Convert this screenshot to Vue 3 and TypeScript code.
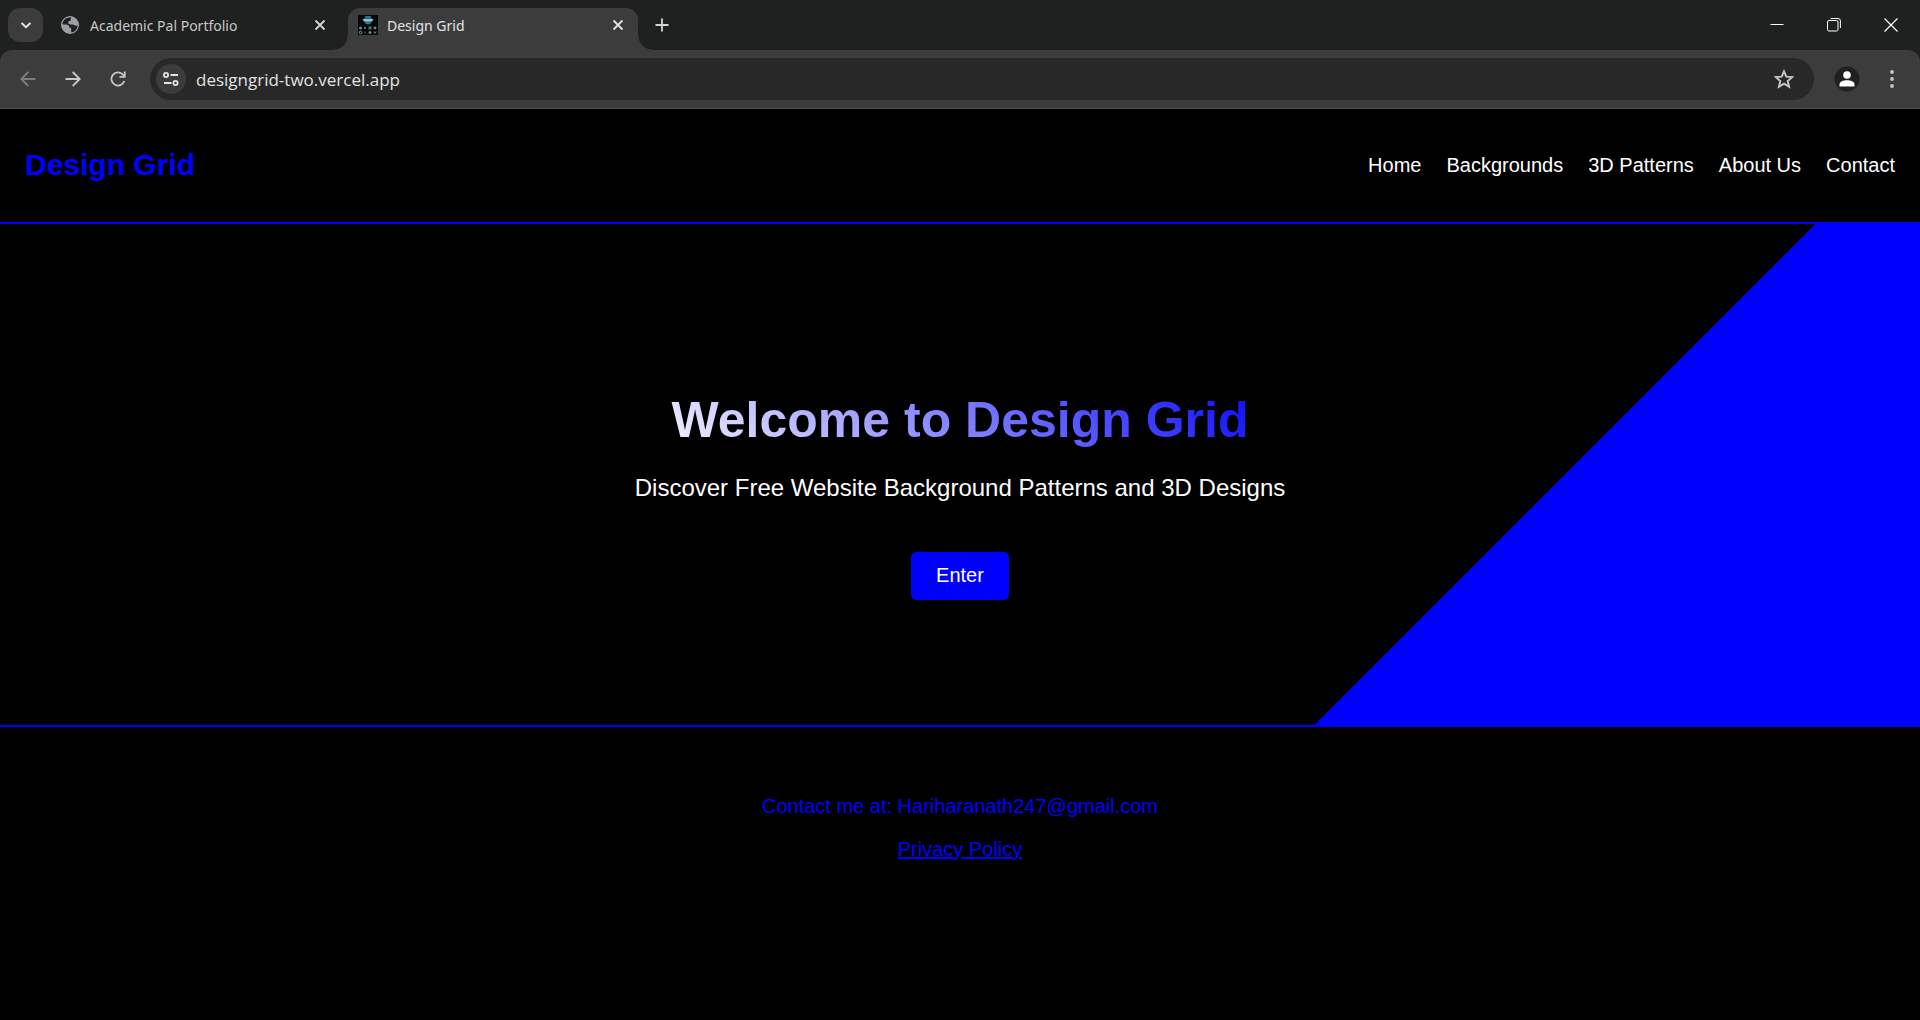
<script setup lang="ts">
import { ref } from 'vue'

interface NavItem {
  label: string
  href: string
}

const address = ref('designgrid-two.vercel.app')

const navItems: NavItem[] = [
  { label: 'Home', href: '#home' },
  { label: 'Backgrounds', href: '#backgrounds' },
  { label: '3D Patterns', href: '#patterns' },
  { label: 'About Us', href: '#about' },
  { label: 'Contact', href: '#contact' },
]
</script>

<template>
  <div class="window">
    <div class="tab-strip">
      <button class="tab-search" aria-label="Search tabs">
        <svg width="12" height="12" viewBox="0 0 12 12"><path d="M1.500 4 6 8.200l4.500-4.200" fill="none" stroke="#e3e3e3" stroke-width="2" /></svg>
      </button>
      <div class="tab">
        <svg class="favicon globe" width="18" height="18" viewBox="0 0 18 18">
          <circle cx="9" cy="9" r="8" fill="none" stroke="#9aa0a6" stroke-width="2" />
          <path d="M10.500 1.500C6 .8 2 3.500 1.300 8.200H5c2.200 0 3.800 1.300 3.800 3.300h1.700v5C14 16 16.500 13 16.700 9.500c-1 .9-2.300 1.100-3.300.3-.8-.7-1.700-.8-2.900-.8-2.700 0-3.900-1-3.900-2.500 0-1.200.9-1.700 2.300-1.700 0-1.700.5-2.800 1.600-3.300z" fill="#1f2120" />
          <path d="M1.500 8.600H5c2 0 3.400 1.200 3.400 3.200h1.700v4.700C5.500 17.500 1.300 14 1.500 8.600zM11 1.600c-1.300.7-1.500 1.800-1.500 3.500-1.400 0-2.300.4-2.300 1.400 0 1.400 1.300 2 3.600 2 1.300 0 2.200.2 3 .9.900.7 2 .3 2.800-.6C16.500 5 14.500 2.300 11 1.600z" fill="#9aa0a6" />
        </svg>
        <span class="tab-title">Academic Pal Portfolio</span>
        <button class="tab-close" aria-label="Close Academic Pal Portfolio">
          <svg width="12" height="12" viewBox="0 0 12 12"><path d="m1.500 1.500 9 9m0-9-9 9" stroke="#d6d6d6" stroke-width="1.800" /></svg>
        </button>
      </div>
      <div class="tab active">
        <svg class="favicon" width="20" height="20" viewBox="0 0 20 20">
          <rect width="20" height="20" fill="#05090b" />
          <path d="M6 5a4 3.800 0 0 1 8 0c0 3-2 4.500-4 4.500S6 8 6 5z" fill="#17647a" />
          <path d="M4.500 4h11l-1.500 2.500H6z" fill="#a9b9be" />
          <path d="M7 1.800h6M8 8.300h4" stroke="#2b9ab8" />
          <g fill="#72848a">
            <circle cx="2.500" cy="13" r="1.500" /><path d="m6 12 2 2m0-2-2 2" stroke="#58666b" />
            <rect x="10.500" y="11.500" width="3" height="3" fill="#456f7c" /><circle cx="17" cy="13" r="1.400" />
            <circle cx="2.500" cy="17.500" r="1.300" fill="none" stroke="#5ba4ba" /><path d="m6 16.500 2 2m0-2-2 2" stroke="#35454b" />
            <circle cx="12" cy="17.500" r="1.500" /><path d="m16 16.500 2 2m0-2-2 2" stroke="#5ba4ba" />
          </g>
        </svg>
        <span class="tab-title">Design Grid</span>
        <button class="tab-close" aria-label="Close Design Grid">
          <svg width="12" height="12" viewBox="0 0 12 12"><path d="m1.500 1.500 9 9m0-9-9 9" stroke="#e3e3e3" stroke-width="1.800" /></svg>
        </button>
      </div>
      <button class="new-tab" aria-label="New tab">
        <svg width="14" height="14" viewBox="0 0 14 14"><path d="M7 .5v13M.5 7h13" stroke="#d6d6d6" stroke-width="1.800" /></svg>
      </button>
      <div class="window-controls">
        <button aria-label="Minimize">
          <svg width="14" height="14" viewBox="0 0 14 14"><path d="M.5 6.500h13" stroke="#fff" /></svg>
        </button>
        <button aria-label="Restore">
          <svg width="14" height="14" viewBox="0 0 14 14" fill="none" stroke="#fff"><rect x=".5" y="2.500" width="10.500" height="10.500" rx="1.500" /><path d="M3.500 .5H11a2.400 2.400 0 0 1 2.400 2.400V10" /></svg>
        </button>
        <button aria-label="Close window">
          <svg width="14" height="14" viewBox="0 0 14 14"><path d="m.5.5 13 13m0-13-13 13" stroke="#fff" stroke-width="1.200" /></svg>
        </button>
      </div>
    </div>

    <div class="toolbar-frame">
      <div class="toolbar">
        <button class="tool" aria-label="Back">
          <svg width="16" height="16" viewBox="0 0 16 16" fill="none" stroke="#7d7d7d" stroke-width="1.800"><path d="M15.500 8H1.500M8.300 1 1.300 8l7 7" /></svg>
        </button>
        <button class="tool" aria-label="Forward">
          <svg width="16" height="16" viewBox="0 0 16 16" fill="none" stroke="#c7c7c7" stroke-width="1.800"><path d="M.5 8h14M7.700 1l7 7-7 7" /></svg>
        </button>
        <button class="tool" aria-label="Reload">
          <svg width="16" height="16" viewBox="0 0 16 16" fill="none" stroke="#c7c7c7" stroke-width="1.800"><path d="M14.300 10A6.600 6.600 0 1 1 13 3.600L14.600 5.300M14.800 .5v5.300H9.500" /></svg>
        </button>
        <div class="omnibox">
          <button class="site-info" aria-label="View site information">
            <svg width="16" height="14" viewBox="0 0 16 14" fill="none" stroke="#e3e3e3" stroke-width="1.800"><circle cx="3" cy="3" r="2.100" /><path d="M7.500 3h7.500M1 11h7.500" /><circle cx="12.500" cy="11" r="2.100" /></svg>
          </button>
          <input v-model="address" class="address" type="text" aria-label="Address" spellcheck="false" />
          <button class="bookmark" aria-label="Bookmark this tab">
            <svg width="20" height="20" viewBox="0 0 20 20"><path d="m10 2.300 2.300 5.300 5.900.5-4.500 3.900 1.400 5.800L10 14.700l-5.100 3.100L6.300 12 1.800 8.100l5.900-.5z" fill="none" stroke="#c7c7c7" stroke-width="1.900" /></svg>
          </button>
        </div>
        <button class="profile" aria-label="Profile">
          <svg width="26" height="26" viewBox="0 0 26 26"><circle cx="13" cy="13" r="12.500" fill="#1f2120" /><circle cx="13" cy="9" r="3.800" fill="#fff" /><path d="M5.500 20.500v-2c0-3 4-4.300 7.500-4.300s7.500 1.300 7.500 4.300v2z" fill="#fff" /></svg>
        </button>
        <button class="menu" aria-label="Browser menu">
          <svg width="4" height="20" viewBox="0 0 4 20" fill="#c7c7c7"><circle cx="2" cy="3" r="1.900" /><circle cx="2" cy="10" r="1.900" /><circle cx="2" cy="17" r="1.900" /></svg>
        </button>
      </div>
    </div>

    <div class="page">
      <header class="site-header">
        <div class="brand">Design Grid</div>
        <nav class="site-nav">
          <a v-for="item in navItems" :key="item.label" :href="item.href">{{ item.label }}</a>
        </nav>
      </header>
      <main class="hero">
        <div class="hero-text">
          <h1>Welcome to Design Grid</h1>
          <p>Discover Free Website Background Patterns and 3D Designs</p>
        </div>
        <button class="enter">Enter</button>
      </main>
      <footer class="site-footer">
        <p>Contact me at: Hariharanath247@gmail.com</p>
        <a href="#privacy">Privacy Policy</a>
      </footer>
    </div>
  </div>
</template>

<style>
body {
  margin: 0;
  background: #000;
}
</style>

<style scoped>
* {
  box-sizing: border-box;
}

button {
  display: flex;
  align-items: center;
  justify-content: center;
  flex: none;
  margin: 0;
  padding: 0;
  border: 0;
  background: none;
}

svg {
  display: block;
  flex: none;
}

.window {
  display: flex;
  flex-direction: column;
  min-height: 100vh;
  background: #000;
  font-family: "Noto Sans", "Open Sans", sans-serif;
}

.tab-strip {
  display: flex;
  height: 50px;
  padding: 8px 0 0 8px;
  background: #1f2120;
}

.tab-search {
  width: 35px;
  height: 34px;
  border-radius: 12px;
  background: #3c3c3c;
}

.tab {
  display: flex;
  align-items: center;
  width: 290px;
  height: 34px;
  margin-left: 5px;
  padding: 0 6px 0 12px;
  font-size: 14px;
  color: #c7c7c7;
}

.favicon {
  margin-right: 9px;
}

.globe {
  margin-left: 1px;
  margin-right: 11px;
}

.tab-title {
  flex: 1;
  padding-top: 2px;
  line-height: 20px;
  white-space: nowrap;
}

.tab-close {
  width: 24px;
  height: 24px;
}

.tab.active {
  position: relative;
  height: 42px;
  margin-left: 10px;
  padding: 0 8px 8px 10px;
  border-radius: 12px 12px 0 0;
  background: #3c3c3c;
  color: #e3e3e3;
}

/* Flared feet that join the active tab to the toolbar. */
.tab.active::before,
.tab.active::after {
  content: "";
  position: absolute;
  bottom: 0;
  width: 14px;
  height: 14px;
}

.tab.active::before {
  right: 100%;
  background: radial-gradient(circle at 0 0, transparent 13px, #3c3c3c 14px);
}

.tab.active::after {
  left: 100%;
  background: radial-gradient(circle at 100% 0, transparent 13px, #3c3c3c 14px);
}

.new-tab {
  width: 34px;
  height: 34px;
  margin-left: 7px;
}

.window-controls {
  display: flex;
  margin-left: auto;
  padding-right: 1px;
}

.window-controls button {
  width: 57px;
  height: 34px;
}

.toolbar-frame {
  background: #1f2120;
}

.toolbar {
  display: flex;
  align-items: center;
  height: 59px;
  padding: 0 16px 0 5px;
  border-bottom: 1px solid #4a4a4a;
  border-radius: 12px 12px 0 0;
  background: #3c3c3c;
}

.tool {
  width: 45px;
  height: 40px;
}

.omnibox {
  display: flex;
  flex: 1;
  align-items: center;
  height: 42px;
  margin-left: 10px;
  padding: 0 20px 0 6px;
  border-radius: 21px;
  background: #282828;
}

.site-info {
  width: 30px;
  height: 30px;
  border-radius: 50%;
  background: #3c3c3c;
}

.address {
  flex: 1;
  min-width: 0;
  height: 30px;
  margin-left: 10px;
  padding: 0;
  border: 0;
  outline: 0;
  background: none;
  color: #e3e3e3;
  font-family: "Open Sans", "Noto Sans", sans-serif;
  font-size: 17px;
}

.profile {
  margin-left: 20px;
}

.menu {
  width: 24px;
  height: 30px;
  margin-left: 20px;
}

.page {
  flex: 1;
  font-family: "Liberation Sans", Arial, sans-serif;
  font-size: 20px;
  color: #fff;
}

.site-header {
  display: flex;
  align-items: center;
  justify-content: space-between;
  padding: 38px 25px 39px;
  border-bottom: 2px solid #00f;
}

.brand {
  font-size: 30px;
  font-weight: 700;
  line-height: 36px;
  padding-bottom: 0;
  color: #00f;
}

.site-nav {
  display: flex;
  gap: 25px;
}

.site-nav a {
  line-height: 23px;
  color: #fff;
  text-decoration: none;
}

.hero {
  display: flex;
  flex-direction: column;
  align-items: center;
  padding: 168px 25px 125px;
  background: linear-gradient(135deg, #000 75%, #00f 75%);
  text-align: center;
}

.hero-text h1 {
  margin: 0 0 24px;
  background: linear-gradient(45deg, #fff, #00f);
  background-clip: text;
  color: transparent;
  font-size: 50px;
  line-height: 57px;
}

.hero-text p {
  margin: 0 0 50px;
  font-size: 24px;
  line-height: 29px;
}

.enter {
  padding: 11px 25px 13px;
  border-radius: 6px;
  background: #00f;
  color: #fff;
  font-family: inherit;
  font-size: 20px;
  line-height: 24px;
}

.site-footer {
  display: flex;
  flex-direction: column;
  align-items: center;
  gap: 20px;
  padding: 68px 25px;
  border-top: 2px solid #00f;
  line-height: 23px;
  color: #00f;
}

.site-footer p {
  margin: 0;
}

.site-footer a {
  color: #00f;
}
</style>
